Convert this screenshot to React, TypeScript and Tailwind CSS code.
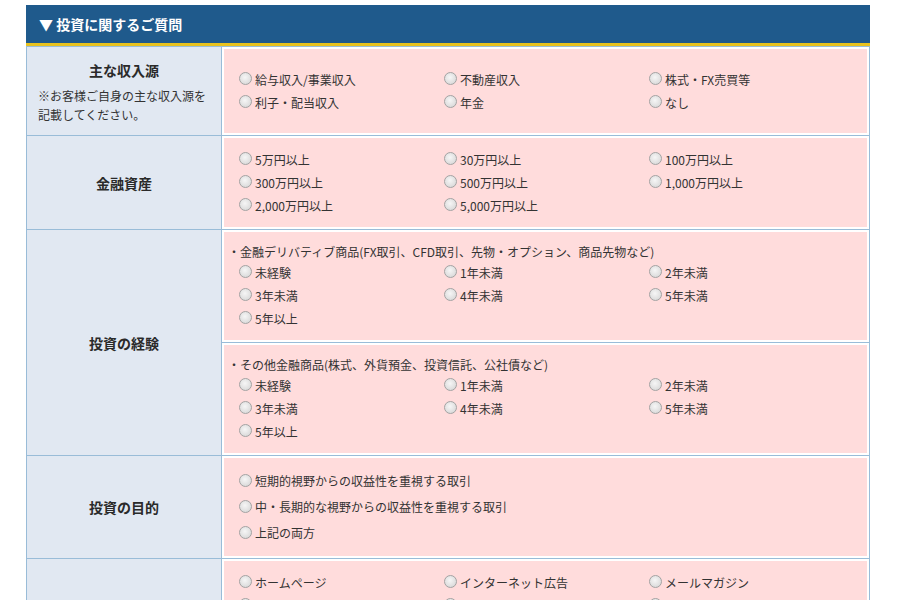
import React from "react";

type Group = { heading?: string; options: string[]; cols: number; lineH?: string };

type Section = {
  label: string;
  note?: string[];
  groups: Group[];
};

const sections: Section[] = [
  {
    label: "主な収入源",
    note: ["※お客様ご自身の主な収入源を", "記載してください。"],
    groups: [
      {
        cols: 3,
        options: ["給与収入/事業収入", "不動産収入", "株式・FX売買等", "利子・配当収入", "年金", "なし"],
      },
    ],
  },
  {
    label: "金融資産",
    groups: [
      {
        cols: 3,
        options: [
          "5万円以上",
          "30万円以上",
          "100万円以上",
          "300万円以上",
          "500万円以上",
          "1,000万円以上",
          "2,000万円以上",
          "5,000万円以上",
        ],
      },
    ],
  },
  {
    label: "投資の経験",
    groups: [
      {
        heading: "・金融デリバティブ商品(FX取引、CFD取引、先物・オプション、商品先物など)",
        cols: 3,
        options: ["未経験", "1年未満", "2年未満", "3年未満", "4年未満", "5年未満", "5年以上"],
      },
      {
        heading: "・その他金融商品(株式、外貨預金、投資信託、公社債など)",
        cols: 3,
        options: ["未経験", "1年未満", "2年未満", "3年未満", "4年未満", "5年未満", "5年以上"],
      },
    ],
  },
  {
    label: "投資の目的",
    groups: [
      {
        cols: 1,
        lineH: "h-[26px]",
        options: ["短期的視野からの収益性を重視する取引", "中・長期的な視野からの収益性を重視する取引", "上記の両方"],
      },
    ],
  },
  {
    label: "口座開設の動機",
    groups: [
      {
        cols: 3,
        options: ["ホームページ", "インターネット広告", "メールマガジン", "雑誌・新聞", "セミナー", "知人の紹介", "その他"],
      },
    ],
  },
];

const Radio = () => (
  <span className="mr-[3px] inline-block h-[13px] w-[13px] shrink-0 -translate-y-[1px] rounded-full border border-[#a3a3a3] bg-[radial-gradient(circle_at_45%_40%,#f6f6f6,#d2d2d2)]" />
);

const Option = ({ text, wide, h }: { text: string; wide: boolean; h?: string }) => (
  <label className={`flex ${h ?? "h-[23px]"} items-center ${wide ? "w-[600px]" : "w-[205px]"}`}>
    <Radio />
    <span className="whitespace-nowrap">{text}</span>
  </label>
);

const GroupCell = ({ group, first }: { group: Group; first: boolean }) => (
  <div className={`flex flex-1 p-[2px] ${first ? "" : "border-t border-[#99bcd8]"}`}>
    <div className="flex flex-1 flex-col justify-center bg-[#ffdcdc] py-[10px]">
      {group.heading && <div className="h-[19px] pl-[4px] leading-[19px] whitespace-nowrap">{group.heading}</div>}
      <div className="flex flex-wrap pl-[15px]">
        {group.options.map((o, i) => (
          <Option key={i} text={o} wide={group.cols === 1} h={group.lineH} />
        ))}
      </div>
    </div>
  </div>
);

export default function App() {
  return (
    <div
      className="min-h-[600px] bg-white pt-[5px] text-[12px] text-[#333]"
      style={{ fontFamily: '"Noto Sans CJK JP", "Noto Sans", sans-serif' }}
    >
      <div className="ml-[26px] w-[844px]">
        <div className="flex h-[41px] items-center border-b-[3px] border-[#e8c21e] bg-[#1f5a8c] pl-[13px] text-[14px] font-bold text-white">
          ▼ 投資に関するご質問
        </div>
        <div className="border-x border-b border-t border-[#99bcd8]">
          {sections.map((s, i) => (
            <div key={i} className={`flex ${i > 0 ? "border-t border-[#99bcd8]" : ""}`}>
              <div className="flex w-[195px] shrink-0 flex-col items-center justify-center border-r border-[#99bcd8] bg-[#e1e8f2] py-[11px]">
                <div className="h-[24px] text-[14px] leading-[24px] font-bold text-[#2a2a2a]">{s.label}</div>
                {s.note && (
                  <div className="mt-[4px] w-full pl-[11px] leading-[19px]">
                    {s.note.map((n, j) => (
                      <div key={j}>{n}</div>
                    ))}
                  </div>
                )}
              </div>
              <div className="flex flex-1 flex-col">
                {s.groups.map((g, j) => (
                  <GroupCell key={j} group={g} first={j === 0} />
                ))}
              </div>
            </div>
          ))}
        </div>
      </div>
    </div>
  );
}
